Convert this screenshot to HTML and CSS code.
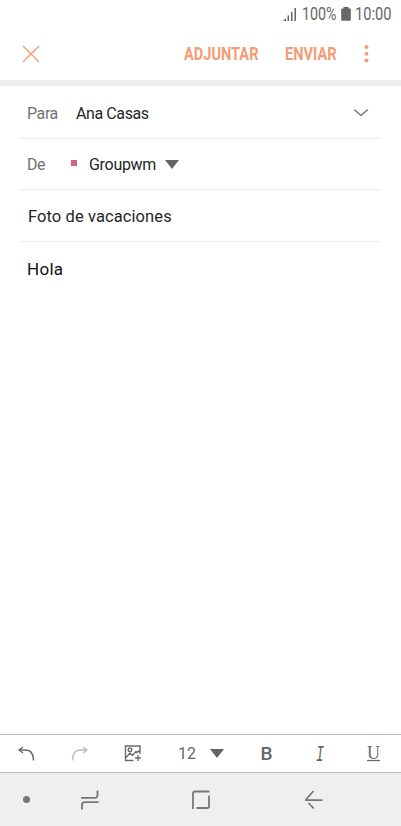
FILE: index.html
```html
<!DOCTYPE html>
<html lang="es">
<head>
    <meta charset="UTF-8">
    <meta name="viewport" content="width=device-width, initial-scale=1.0">
    <title>Redactar correo</title>
    <link rel="stylesheet" href="styles.css">
</head>
<body>
    <div class="status-bar">
        <svg class="signal" width="14" height="13" viewBox="0 0 14 13">
            <path d="M0 13l3-3v3zM4.500 7.500h1.500V13H4.500zM8 4h1.500v9H8zM11.500 0H13v13h-1.500z"/>
        </svg>
        <svg class="battery-level" width="35" height="28">
            <text x="0" y="20" textLength="34.500" lengthAdjust="spacingAndGlyphs">100%</text>
        </svg>
        <svg class="battery" width="10" height="14" viewBox="0 0 10 14">
            <path d="M2.500 0h5v1.500H9q.8 0 .8.800V13q0 .8-.8.800H1q-.8 0-.8-.8V2.300q0-.8.8-.8h1.500z"/>
        </svg>
        <svg class="clock" width="37" height="28">
            <text x="0" y="20" textLength="36.500" lengthAdjust="spacingAndGlyphs">10:00</text>
        </svg>
    </div>

    <header class="action-bar">
        <svg class="close" width="18" height="18" viewBox="0 0 18 18">
            <path d="M1 1l16 16M17 1L1 17"/>
        </svg>
        <svg class="action attach" width="75" height="28">
            <text x="0" y="20" textLength="74.500" lengthAdjust="spacingAndGlyphs">ADJUNTAR</text>
        </svg>
        <svg class="action send" width="52" height="28">
            <text x="0" y="20" textLength="51.500" lengthAdjust="spacingAndGlyphs">ENVIAR</text>
        </svg>
        <svg class="more" width="6" height="20" viewBox="0 0 6 20">
            <circle cx="2.500" cy="3" r="2"/>
            <circle cx="2.500" cy="9.800" r="2"/>
            <circle cx="2.500" cy="16.500" r="2"/>
        </svg>
    </header>

    <main class="compose">
        <div class="field to">
            <span class="label">Para</span>
            <span class="value">Ana Casas</span>
            <svg class="chevron" width="16" height="10" viewBox="0 0 16 10">
                <path d="M1.200 1.700L8 7.500l6.800-5.800"/>
            </svg>
        </div>
        <div class="field from">
            <span class="label">De</span>
            <span class="account-color"></span>
            <span class="value">Groupwm</span>
            <svg class="triangle" width="14" height="9" viewBox="0 0 14 9"><path d="M0 0h14L7 9z"/></svg>
        </div>
        <div class="field subject">Foto de vacaciones</div>
        <div class="message">Hola</div>
    </main>

    <div class="format-bar">
        <svg class="line-icon" width="18" height="16" viewBox="0 0 18 16">
            <path d="M5 1L1 4l4 3M1 4h6q8.500 0 8.500 10.500"/>
        </svg>
        <svg class="line-icon disabled" width="18" height="16" viewBox="0 0 18 16">
            <path d="M12 1l4 3-4 3M16 4h-6Q1.500 4 1.500 14.500"/>
        </svg>
        <svg class="line-icon image" width="18" height="17" viewBox="0 0 18 17">
            <path d="M9.500 15.500H1.500V1h14.500v8M2 12.500l4-4.500 2.500 2.500 3.500-4 1 1 2.500-2M11 13h6M14 10v6"/>
            <circle cx="6" cy="4.800" r="1.800"/>
        </svg>
        <div class="font-size">
            <span>12</span>
            <svg class="triangle" width="14" height="9" viewBox="0 0 14 9"><path d="M0 0h14L7 9z"/></svg>
        </div>
        <span class="bold">B</span>
        <svg class="italic" width="12" height="20">
            <text x="2" y="16.500" textLength="8" lengthAdjust="spacingAndGlyphs">I</text>
        </svg>
        <svg class="underline" width="14" height="20">
            <text x="0" y="14.500" textLength="13" lengthAdjust="spacingAndGlyphs">U</text>
            <path d="M0 16.500h13"/>
        </svg>
    </div>

    <nav class="nav-bar">
        <span class="dot"></span>
        <svg width="18" height="20" viewBox="0 0 18 20">
            <path d="M0 7.800h14q2.500 0 2.500-2.500V.5M17.500 12.200H3.500q-2.500 0-2.500 2.500v4.800"/>
        </svg>
        <svg width="18" height="20" viewBox="0 0 18 20">
            <path d="M1 19V3.500Q1 1.500 3 1.500h14.500M17 5.500V16q0 2-2 2H4.500"/>
        </svg>
        <svg width="18" height="20" viewBox="0 0 18 20">
            <path d="M8.500 1L1 9.500V10.200h16.500M3.500 13l5.300 5.500"/>
        </svg>
    </nav>
</body>
</html>
```

FILE: styles.css
```css
* {
    box-sizing: border-box;
}

body {
    margin: 0;
    height: 826px;
    display: flex;
    flex-direction: column;
    background: #fff;
    color: #252525;
    font-family: Roboto, "Liberation Sans", sans-serif;
    font-size: 16px;
    overflow: hidden;
}

svg {
    display: block;
    flex: none;
    overflow: visible;
}

/* Status bar */
.status-bar {
    height: 28px;
    padding: 0 9px 0 0;
    display: flex;
    justify-content: flex-end;
    align-items: center;
    fill: #666;
    font-size: 18px;
}

.battery-level {
    margin: 0 4px 0 5px;
}

.clock {
    margin-left: 4px;
}

/* Action bar */
.action-bar {
    height: 58px;
    padding: 3px 31px 3px 22px;
    display: flex;
    align-items: center;
    border-bottom: 6px solid #eee;
    fill: #f59b75;
    font-size: 18px;
    font-weight: 700;
}

.action-bar .close {
    fill: none;
    stroke: #f59b75;
    stroke-width: 1.4;
}

.attach {
    margin-left: auto;
}

.send {
    margin: 0 27px 0 26px;
}

/* Message fields */
.compose {
    flex: 1;
    padding: 0 21px 0 20px;
}

.field {
    height: 52px;
    padding: 2px 11px 0 7px;
    display: flex;
    align-items: center;
    border-bottom: 1px solid #ececec;
}

.to {
    height: 53px;
}

.from {
    height: 51px;
    padding-top: 0;
}

.subject {
    padding: 1px 11px 0 8px;
    font-size: 16.5px;
    letter-spacing: 0.09px;
}

.label {
    width: 49px;
    color: #727272;
    letter-spacing: -0.4px;
}

.value {
    letter-spacing: -0.4px;
}

.from .label {
    width: 44px;
}

.from .value {
    letter-spacing: -0.3px;
}

.account-color {
    width: 6px;
    height: 6px;
    margin: -2px 12px 0 0;
    background: #d9608c;
}

.chevron {
    margin: -1px 0 0 auto;
    fill: none;
    stroke: #888;
    stroke-width: 1.7;
}

.triangle {
    fill: #646464;
}

.from .triangle {
    margin-left: 9px;
}

.message {
    padding: 17px 7px;
    font-size: 17px;
    letter-spacing: 0.3px;
    color: #111;
}

/* Formatting tools */
.format-bar {
    height: 39px;
    display: grid;
    grid-template-columns: 53px 54px 53px 80px 53px 54px 54px;
    align-items: center;
    justify-items: center;
    border-top: 1px solid #bdbdbd;
    border-bottom: 1px solid #bdbdbd;
    color: #666;
}

.line-icon {
    fill: none;
    stroke: #6b6b6b;
    stroke-width: 1.4;
}

.disabled {
    stroke: #bdbdbd;
}

.image {
    margin-right: 1px;
}

.font-size {
    width: 80px;
    padding: 0 0 0 18px;
    display: flex;
    align-items: center;
    gap: 14px;
}

.bold {
    font-size: 19px;
    font-weight: 500;
}

.italic {
    fill: #666;
    font-family: "Liberation Mono", monospace;
    font-size: 22px;
    font-style: italic;
}

.underline {
    fill: #666;
    stroke: #666;
    stroke-width: 1.3;
    font-family: "Liberation Serif", serif;
    font-size: 18px;
}

.underline text {
    stroke: none;
}

/* System navigation */
.nav-bar {
    height: 53px;
    display: grid;
    grid-template-columns: 52px 75px 148px 77px 49px;
    align-items: center;
    justify-items: center;
    background: #efefef;
    fill: none;
    stroke: #777;
    stroke-width: 1.8;
}

.dot {
    width: 7px;
    height: 7px;
    border-radius: 50%;
    background: #777;
}
```
